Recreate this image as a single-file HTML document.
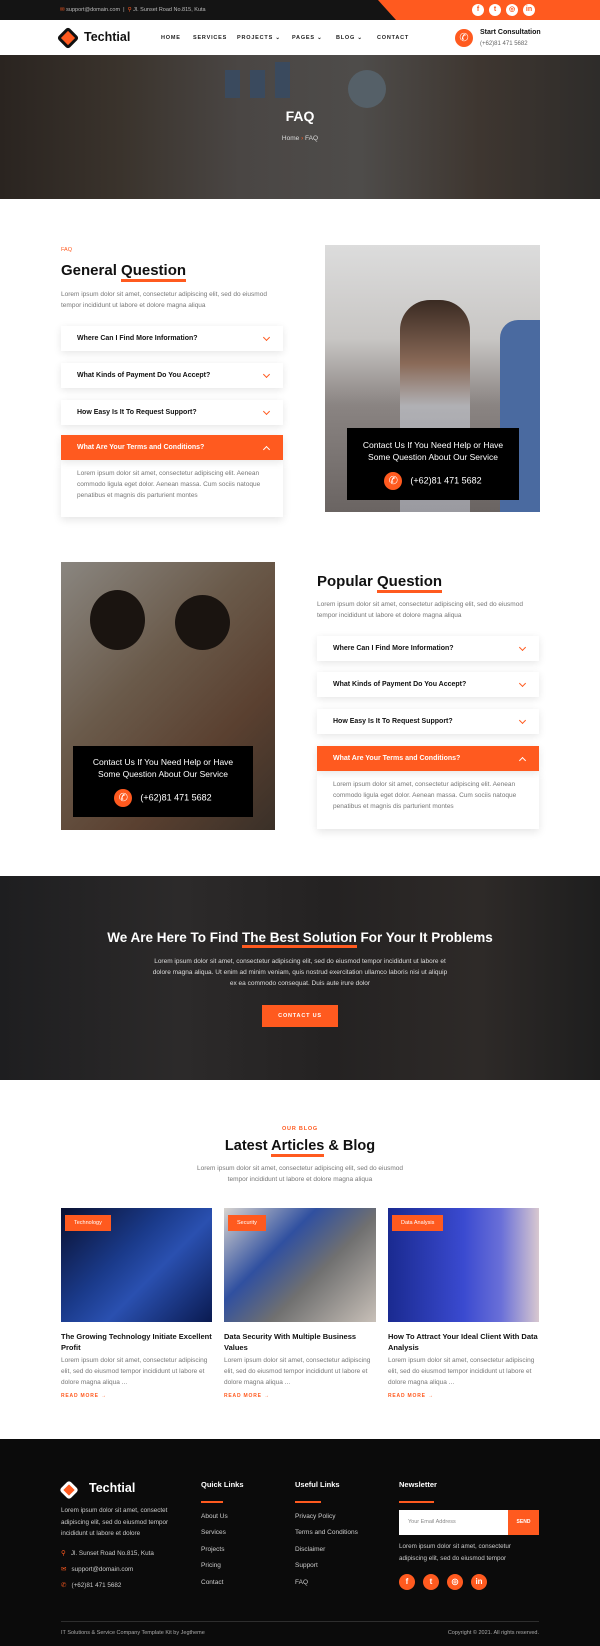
<!DOCTYPE html>
<html><head><meta charset="utf-8"><style>
*{margin:0;padding:0;box-sizing:border-box}
body{width:600px;height:1646px;position:relative;font-family:"Liberation Sans",sans-serif;background:#fff;overflow:hidden;color:#111}
.a{position:absolute}
.or{color:#ff5a1f}
.p{font-size:6.5px;line-height:11px;color:#777}
.acc{position:absolute;background:#fff;box-shadow:0 2px 8px rgba(0,0,0,.1);height:25px;font-size:7px;font-weight:bold;padding:0 16px;line-height:25px;color:#111}
.acc:after{content:"";position:absolute;right:14px;top:9px;width:4px;height:4px;border-right:1.5px solid #ff5a1f;border-bottom:1.5px solid #ff5a1f;transform:rotate(45deg)}
.acc.on{background:#ff5a1f;color:#fff}
.acc.on:after{border-color:#fff;transform:rotate(-135deg);top:12px}
.ul{border-bottom:3px solid #ff5a1f}
.ov{position:absolute;background:#000;color:#fff;text-align:center;font-size:8.5px;line-height:12px}
.ph{display:inline-block;width:18px;height:18px;border-radius:50%;background:#ff5a1f;vertical-align:middle;margin-right:8px;color:#fff;font-size:11px;line-height:18px}
.soc{display:inline-block;width:12px;height:12px;border-radius:50%;background:#fff;margin-left:5px;color:#ff5a1f;font-size:7px;text-align:center;line-height:12px;font-weight:bold;vertical-align:top}
.fs{display:inline-block;width:16px;height:16px;border-radius:50%;background:#ff5a1f;margin-right:8px;color:#fff;font-size:8px;text-align:center;line-height:16px;font-weight:bold;vertical-align:top}
.nav{font-size:5.5px;font-weight:bold;letter-spacing:.8px;color:#222}
.tag{position:absolute;top:7px;left:4px;background:#ff5a1f;color:#fff;font-size:5.5px;padding:5px 9px}
.bt{font-size:7.5px;font-weight:bold;line-height:11px}
.rm{font-size:5px;font-weight:bold;color:#ff5a1f;letter-spacing:.8px}
.fl{font-size:6.5px;color:#ccc;line-height:16.5px}
.fh{font-size:7.5px;color:#fff;font-weight:bold}
.fb{width:22px;height:1.5px;background:#ff5a1f;margin-top:12px}
</style></head><body>
<!-- topbar -->
<div class="a" style="left:0;top:0;width:600px;height:20px;background:#141414"></div>
<div class="a" style="left:378px;top:0;width:222px;height:20px;background:#ff5a1f;clip-path:polygon(0 0,100% 0,100% 100%,18px 100%)"></div>
<div class="a" style="left:60px;top:7px;font-size:5.5px;color:#bbb"><span class="or">✉</span> support@domain.com &nbsp;|&nbsp; <span class="or">⚲</span> Jl. Sunset Road No.815, Kuta</div>
<div class="a" style="left:467px;top:4px;font-size:0;line-height:12px;height:12px"><span class="soc">f</span><span class="soc">t</span><span class="soc">◎</span><span class="soc">in</span></div>
<!-- header -->
<div class="a" style="left:60px;top:30px;width:16px;height:16px;background:#ff5a1f;transform:rotate(45deg);border-radius:3px;border:3px solid #111"></div>
<div class="a" style="left:84px;top:30px;font-size:12.5px;font-weight:bold">Techtial</div>
<div class="a nav" style="left:161px;top:35px">HOME</div>
<div class="a nav" style="left:193px;top:35px">SERVICES</div>
<div class="a nav" style="left:237px;top:35px">PROJECTS ⌄</div>
<div class="a nav or" style="left:292px;top:35px">PAGES ⌄</div>
<div class="a nav" style="left:336px;top:35px">BLOG ⌄</div>
<div class="a nav" style="left:377px;top:35px">CONTACT</div>
<div class="a" style="left:455px;top:29px;width:18px;height:18px;border-radius:50%;background:#ff5a1f;color:#fff;font-size:11px;text-align:center;line-height:18px">✆</div>
<div class="a" style="left:480px;top:29px;font-size:7px;font-weight:bold">Start Consultation</div>
<div class="a" style="left:480px;top:41px;font-size:6px;color:#666">(+62)81 471 5682</div>
<!-- hero -->
<div class="a" style="left:0;top:55px;width:600px;height:144px;background:linear-gradient(90deg,#2a2420 0%,#3a332c 20%,#4a4644 40%,#4e4c4a 60%,#3e3630 80%,#2e2c2a 100%)"></div>
<div class="a" style="left:225px;top:70px;width:15px;height:28px;background:#3a4a5e"></div>
<div class="a" style="left:250px;top:70px;width:15px;height:28px;background:#3a4a5e"></div>
<div class="a" style="left:275px;top:62px;width:15px;height:36px;background:#3a4a5e"></div>
<div class="a" style="left:348px;top:70px;width:38px;height:38px;border-radius:50%;background:#556068"></div>
<div class="a" style="left:0;top:108px;width:600px;text-align:center;font-size:14px;font-weight:bold;color:#fff">FAQ</div>
<div class="a" style="left:0;top:135px;width:600px;text-align:center;font-size:6.5px;color:#ddd">Home <span class="or">›</span> FAQ</div>
<!-- general -->
<div class="a or" style="left:61px;top:247px;font-size:5.5px">FAQ</div>
<div class="a" style="left:61px;top:262px;font-size:15px;font-weight:bold">General <span class="ul">Question</span></div>
<div class="a p" style="left:61px;top:289px;width:215px">Lorem ipsum dolor sit amet, consectetur adipiscing elit, sed do eiusmod tempor incididunt ut labore et dolore magna aliqua</div>
<div class="a" style="left:61px;top:460px;width:222px;height:57px;background:#fff;box-shadow:0 3px 8px rgba(0,0,0,.1)"></div>
<div class="acc" style="left:61px;top:326px;width:222px">Where Can I Find More Information?</div>
<div class="acc" style="left:61px;top:363px;width:222px">What Kinds of Payment Do You Accept?</div>
<div class="acc" style="left:61px;top:400px;width:222px">How Easy Is It To Request Support?</div>
<div class="acc on" style="left:61px;top:435px;width:222px">What Are Your Terms and Conditions?</div>
<div class="a p" style="left:77px;top:468px;width:195px">Lorem ipsum dolor sit amet, consectetur adipiscing elit. Aenean commodo ligula eget dolor. Aenean massa. Cum sociis natoque penatibus et magnis dis parturient montes</div>
<div class="a" style="left:325px;top:245px;width:215px;height:267px;background:linear-gradient(180deg,#dcdcdc 0%,#c8c6c4 35%,#8a8482 60%,#6a6462 100%)"></div>
<div class="a" style="left:400px;top:300px;width:70px;height:212px;background:linear-gradient(180deg,#3a2a22 0%,#8a6a58 30%,#b0b0b4 50%,#9a9aa0 100%);border-radius:30px 30px 0 0"></div>
<div class="a" style="left:500px;top:320px;width:40px;height:192px;background:#4a6aa0;border-radius:18px 0 0 0"></div>
<div class="ov" style="left:347px;top:428px;width:172px;height:72px;padding-top:11px">Contact Us If You Need Help or Have<br>Some Question About Our Service<div style="margin-top:9px;font-size:9px"><span class="ph">✆</span>(+62)81 471 5682</div></div>
<!-- popular -->
<div class="a" style="left:61px;top:562px;width:214px;height:268px;background:linear-gradient(135deg,#8a8680 0%,#6a5a4a 40%,#5a4030 70%,#3a3028 100%)"></div>
<div class="a" style="left:90px;top:590px;width:55px;height:60px;border-radius:50%;background:#1a1410"></div>
<div class="a" style="left:175px;top:595px;width:55px;height:55px;border-radius:50%;background:#1a1410"></div>
<div class="ov" style="left:73px;top:746px;width:180px;height:71px;padding-top:10px">Contact Us If You Need Help or Have<br>Some Question About Our Service<div style="margin-top:9px;font-size:9px"><span class="ph">✆</span>(+62)81 471 5682</div></div>
<div class="a" style="left:317px;top:573px;font-size:15px;font-weight:bold">Popular <span class="ul">Question</span></div>
<div class="a p" style="left:317px;top:599px;width:222px">Lorem ipsum dolor sit amet, consectetur adipiscing elit, sed do eiusmod tempor incididunt ut labore et dolore magna aliqua</div>
<div class="a" style="left:317px;top:771px;width:222px;height:58px;background:#fff;box-shadow:0 3px 8px rgba(0,0,0,.1)"></div>
<div class="acc" style="left:317px;top:636px;width:222px">Where Can I Find More Information?</div>
<div class="acc" style="left:317px;top:672px;width:222px">What Kinds of Payment Do You Accept?</div>
<div class="acc" style="left:317px;top:709px;width:222px">How Easy Is It To Request Support?</div>
<div class="acc on" style="left:317px;top:746px;width:222px">What Are Your Terms and Conditions?</div>
<div class="a p" style="left:333px;top:779px;width:195px">Lorem ipsum dolor sit amet, consectetur adipiscing elit. Aenean commodo ligula eget dolor. Aenean massa. Cum sociis natoque penatibus et magnis dis parturient montes</div>
<!-- CTA -->
<div class="a" style="left:0;top:876px;width:600px;height:204px;background:linear-gradient(90deg,#1e1e20 0%,#2c2a2a 30%,#242222 55%,#2e2a28 80%,#1e1e1e 100%)"></div>
<div class="a" style="left:0;top:930px;width:600px;text-align:center;font-size:13.5px;font-weight:bold;color:#fff">We Are Here To Find <span class="ul">The Best Solution</span> For Your It Problems</div>
<div class="a" style="left:150px;top:956px;width:300px;text-align:center;font-size:6.5px;line-height:11px;color:#ddd">Lorem ipsum dolor sit amet, consectetur adipiscing elit, sed do eiusmod tempor incididunt ut labore et dolore magna aliqua. Ut enim ad minim veniam, quis nostrud exercitation ullamco laboris nisi ut aliquip ex ea commodo consequat. Duis aute irure dolor</div>
<div class="a" style="left:262px;top:1005px;width:76px;height:22px;background:#ff5a1f;color:#fff;font-size:5.5px;font-weight:bold;letter-spacing:.8px;text-align:center;line-height:22px">CONTACT US</div>
<!-- blog -->
<div class="a or" style="left:0;top:1126px;width:600px;text-align:center;font-size:5.5px;font-weight:bold;letter-spacing:.8px">OUR BLOG</div>
<div class="a" style="left:0;top:1138px;width:600px;text-align:center;font-size:14.5px;font-weight:bold">Latest <span class="ul">Articles</span> &amp; Blog</div>
<div class="a p" style="left:190px;top:1163px;width:220px;text-align:center">Lorem ipsum dolor sit amet, consectetur adipiscing elit, sed do eiusmod tempor incididunt ut labore et dolore magna aliqua</div>
<div class="a" style="left:61px;top:1208px;width:151px;height:114px;background:linear-gradient(135deg,#0a1030,#1a3a8a 40%,#2a50b0 60%,#0a1a50)"><div class="tag">Technology</div></div>
<div class="a" style="left:224px;top:1208px;width:152px;height:114px;background:linear-gradient(135deg,#d8d4d0,#3050a0 35%,#707070 60%,#c8c0b8)"><div class="tag">Security</div></div>
<div class="a" style="left:388px;top:1208px;width:151px;height:114px;background:linear-gradient(90deg,#1a2a90,#3a4ad0 50%,#6a70d8 75%,#d8c8d0)"><div class="tag">Data Analysis</div></div>
<div class="a bt" style="left:61px;top:1331px;width:152px">The Growing Technology Initiate Excellent Profit</div>
<div class="a bt" style="left:224px;top:1331px;width:152px">Data Security With Multiple Business Values</div>
<div class="a bt" style="left:388px;top:1331px;width:152px">How To Attract Your Ideal Client With Data Analysis</div>
<div class="a p" style="left:61px;top:1355px;width:152px">Lorem ipsum dolor sit amet, consectetur adipiscing elit, sed do eiusmod tempor incididunt ut labore et dolore magna aliqua ...</div>
<div class="a p" style="left:224px;top:1355px;width:152px">Lorem ipsum dolor sit amet, consectetur adipiscing elit, sed do eiusmod tempor incididunt ut labore et dolore magna aliqua ...</div>
<div class="a p" style="left:388px;top:1355px;width:152px">Lorem ipsum dolor sit amet, consectetur adipiscing elit, sed do eiusmod tempor incididunt ut labore et dolore magna aliqua ...</div>
<div class="a rm" style="left:61px;top:1393px">READ MORE →</div>
<div class="a rm" style="left:224px;top:1393px">READ MORE →</div>
<div class="a rm" style="left:388px;top:1393px">READ MORE →</div>
<!-- footer -->
<div class="a" style="left:0;top:1439px;width:600px;height:207px;background:#0b0b0b"></div>
<div class="a" style="left:62px;top:1483px;width:14px;height:14px;background:#ff5a1f;transform:rotate(45deg);border-radius:3px;border:3px solid #fff"></div>
<div class="a" style="left:89px;top:1481px;font-size:12.5px;font-weight:bold;color:#fff">Techtial</div>
<div class="a" style="left:61px;top:1505px;width:120px;font-size:6.3px;line-height:11.5px;color:#ccc">Lorem ipsum dolor sit amet, consectet adipiscing elit, sed do eiusmod tempor incididunt ut labore et dolore</div>
<div class="a" style="left:61px;top:1546px;font-size:6.3px;line-height:16px;color:#ccc"><span class="or">⚲</span>&nbsp;&nbsp; Jl. Sunset Road No.815, Kuta<br><span class="or">✉</span>&nbsp;&nbsp; support@domain.com<br><span class="or">✆</span>&nbsp;&nbsp; (+62)81 471 5682</div>
<div class="a" style="left:201px;top:1480px"><div class="fh">Quick Links</div><div class="fb"></div><div class="fl" style="margin-top:6px">About Us<br>Services<br>Projects<br>Pricing<br>Contact</div></div>
<div class="a" style="left:295px;top:1480px"><div class="fh">Useful Links</div><div class="fb" style="width:26px"></div><div class="fl" style="margin-top:6px">Privacy Policy<br>Terms and Conditions<br>Disclaimer<br>Support<br>FAQ</div></div>
<div class="a" style="left:399px;top:1480px"><div class="fh">Newsletter</div><div class="fb" style="width:35px"></div></div>
<div class="a" style="left:399px;top:1510px;width:109px;height:25px;background:#fff;font-size:5.5px;color:#888;line-height:25px;padding-left:9px">Your Email Address</div>
<div class="a" style="left:508px;top:1510px;width:31px;height:25px;background:#ff5a1f;color:#fff;font-size:5px;font-weight:bold;text-align:center;line-height:25px">SEND</div>
<div class="a" style="left:399px;top:1541px;width:140px;font-size:6.3px;line-height:11.5px;color:#ccc">Lorem ipsum dolor sit amet, consectetur adipiscing elit, sed do eiusmod tempor</div>
<div class="a" style="left:399px;top:1574px;font-size:0;line-height:16px"><span class="fs">f</span><span class="fs">t</span><span class="fs">◎</span><span class="fs">in</span></div>
<div class="a" style="left:61px;top:1621px;width:478px;height:1px;background:#2e2e2e"></div>
<div class="a" style="left:61px;top:1630px;font-size:5.5px;color:#aaa">IT Solutions &amp; Service Company Template Kit by Jegtheme</div>
<div class="a" style="left:339px;top:1630px;width:200px;text-align:right;font-size:5.5px;color:#aaa">Copyright © 2021. All rights reserved.</div>
</body></html>
